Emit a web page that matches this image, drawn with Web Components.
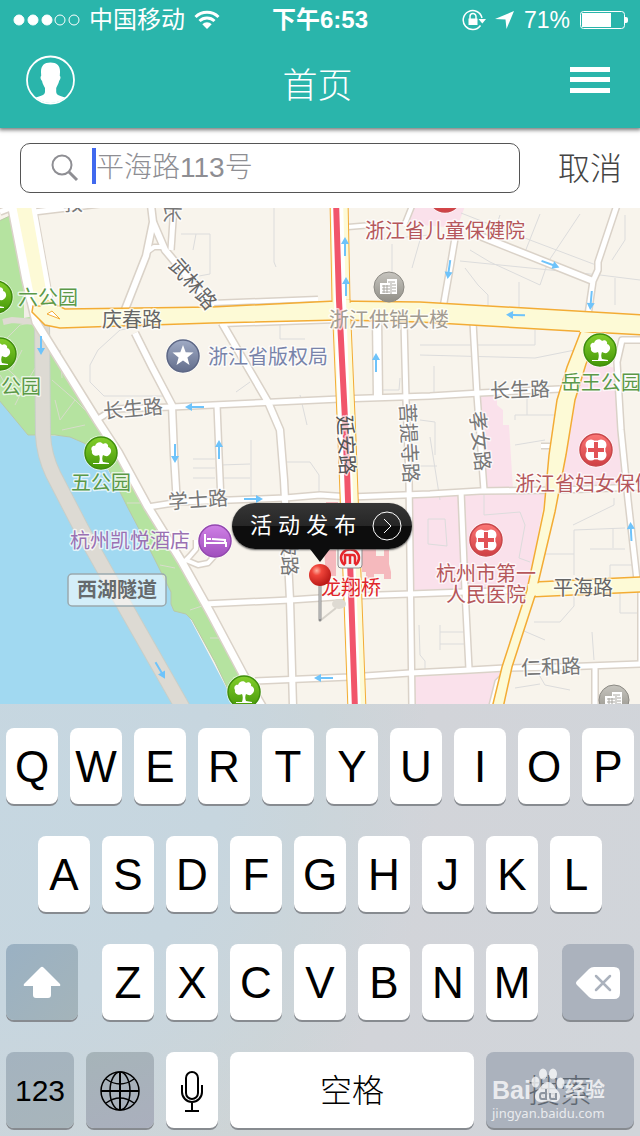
<!DOCTYPE html>
<html lang="zh-CN">
<head>
<meta charset="UTF-8">
<meta name="viewport" content="width=device-width, initial-scale=1">
<title>首页</title>
<style>
    body {
        margin: 0;
        min-height: 100vh;
        display: flex;
        flex-direction: column;
        background: white;
        font-family: "Liberation Sans", "Noto Sans CJK SC", sans-serif;
        font-weight: 300;
    }

    header {
        position: relative;
        z-index: 1;
        background: #2ab5ab;
        color: white;
        box-shadow: 0 1px 4px 1px #777;
    }
</style>
</head>
<body>
    <header>
        <status-bar operador="中国移动" hora="下午6:53" bateria="71"></status-bar>
        <nav-bar>首页</nav-bar>
    </header>
    <search-row valor="平海路113号">取消</search-row>
    <city-map>
        <map-callout>活 动 发 布</map-callout>
    </city-map>
    <soft-keyboard></soft-keyboard>

<script>
class StatusBar extends HTMLElement {
    constructor() {
        super();
        this.attachShadow({ mode: 'open' });
    }

    connectedCallback() {
        const operador = this.getAttribute('operador') || '';
        const hora = this.getAttribute('hora') || '';
        const bateria = this.getAttribute('bateria') || '0';

        this.shadowRoot.innerHTML = `
            <style>
                :host {
                    display: grid;
                    grid-template-columns: 1fr auto 1fr;
                    align-items: center;
                    height: 40px;
                    padding: 0 12px;
                    font-size: 24px;
                    line-height: 40px;
                    white-space: nowrap;
                }

                div {
                    display: flex;
                    align-items: center;
                    gap: 9px;
                }

                .derecha {
                    justify-content: flex-end;
                    font-size: 23px;
                }

                span {
                    font-weight: 400;
                }

                b {
                    font-weight: 700;
                }
            </style>
            <div>
                <svg width="68" height="14" fill="white" stroke="white">
                    <circle cx="7" cy="7" r="5"/><circle cx="21" cy="7" r="5"/><circle cx="35" cy="7" r="5"/>
                    <g fill="none"><circle cx="48" cy="7" r="5"/><circle cx="62" cy="7" r="5"/></g>
                </svg>
                <span>${operador}</span>
                <svg width="26" height="20" viewBox="0 0 26 20" fill="none" stroke="white" stroke-width="3">
                    <path d="M1.5 7 A16.5 16.5 0 0 1 24.5 7"/>
                    <path d="M5.5 11 A10.8 10.8 0 0 1 20.500 11"/>
                    <path d="M13 19 L8.300 14.300 A6.500 6.500 0 0 1 17.700 14.300 Z" fill="white" stroke="none"/>
                </svg>
            </div>
            <b>${hora}</b>
            <div class="derecha">
                <svg width="24" height="22" viewBox="0 0 24 22" fill="none" stroke="white">
                    <path d="M18.500 16.500 A9.500 9.500 0 1 1 20 9" stroke-width="1.500"/>
                    <path d="M16.500 10 H24 L20.300 14.500 Z" fill="white" stroke="none"/>
                    <rect x="6.500" y="9.500" width="9" height="6.500" fill="white" stroke="none"/>
                    <path d="M8 10 V7.500 A3 3 0 0 1 14 7.500 V10" stroke-width="1.500"/>
                </svg>
                <svg width="20" height="20" viewBox="0 0 20 20" fill="white"><path d="M19 1 L11.500 19 L10.500 9.500 L0 9 Z"/></svg>
                <span>${bateria}%</span>
                <svg width="49" height="20" viewBox="0 0 49 20" fill="none" stroke="white">
                    <rect x="1.500" y="1.500" width="44" height="17" rx="3"/>
                    <rect x="3" y="3" width="29" height="14" fill="white" stroke="none"/>
                    <path d="M46 7 h1 a2 2 0 0 1 2 2 v2 a2 2 0 0 1 -2 2 h-1 Z" fill="white" stroke="none"/>
                </svg>
            </div>
        `;
    }
}

class NavBar extends HTMLElement {
    constructor() {
        super();
        this.attachShadow({ mode: 'open' });
    }

    connectedCallback() {
        this.shadowRoot.innerHTML = `
            <style>
                :host {
                    display: grid;
                    grid-template-columns: 1fr auto 1fr;
                    align-items: center;
                    height: 80px;
                    padding: 0 30px 8px 25px;
                }

                h1 {
                    margin: 0;
                    padding-top: 12px;
                    font-size: 35px;
                    font-weight: 300;
                    line-height: 44px;
                }

                button {
                    border: 0;
                    padding: 0;
                    background: none;
                    justify-self: start;
                }

                .menu {
                    justify-self: end;
                }

                svg {
                    display: block;
                }
            </style>
            <button aria-label="个人中心">
                <svg width="51" height="50" viewBox="0 0 51 50">
                    <clipPath id="c"><circle cx="25.500" cy="25" r="23"/></clipPath>
                    <circle cx="25.500" cy="25" r="23.500" fill="none" stroke="white" stroke-width="1.800"/>
                    <path clip-path="url(#c)" fill="white" d="M25.500 7.500 C32 7.500 35.300 11 35 17 L34.800 21 C36 21.500 35.500 24.500 34.200 25.800 C33.500 29 32 31 31.200 33 V37 C31.500 40.500 36 41 40 42.500 C42 43.500 43 46 43 50 H8 C8 46 9 43.500 11 42.500 C15 41 19.500 40.500 20 37 V33 C19 31 17.500 29 17 25.800 C15.500 24.500 15 21.500 16.200 21 L16 17 C15.800 11 19 7.500 25.500 7.500 Z"/>
                </svg>
            </button>
            <h1><slot></slot></h1>
            <button class="menu" aria-label="菜单">
                <svg width="40" height="28" fill="white">
                    <rect y="1" width="40" height="5"/><rect y="11" width="40" height="5"/><rect y="22" width="40" height="5"/>
                </svg>
            </button>
        `;
    }
}

class SearchRow extends HTMLElement {
    constructor() {
        super();
        this.attachShadow({ mode: 'open' });
    }

    connectedCallback() {
        const valor = this.getAttribute('valor') || '';

        this.shadowRoot.innerHTML = `
            <style>
                :host {
                    display: flex;
                    align-items: center;
                    gap: 38px;
                    height: 80px;
                    padding: 0 18px 0 20px;
                    background: white;
                }

                label {
                    flex: 1;
                    min-width: 0;
                    height: 48px;
                    display: flex;
                    align-items: center;
                    border: 1px solid #555;
                    border-radius: 10px;
                    padding-left: 30px;
                }

                .cursor {
                    width: 4px;
                    height: 36px;
                    margin: 0 0 4px 13px;
                    background: #4169ee;
                }

                input {
                    flex: 1;
                    min-width: 0;
                    border: 0;
                    padding: 0;
                    outline: none;
                    background: none;
                    font: inherit;
                    font-size: 28px;
                    line-height: 40px;
                    color: #8e8e93;
                }

                button {
                    border: 0;
                    padding: 2px 0 0;
                    background: none;
                    font: inherit;
                    font-size: 32px;
                    line-height: 40px;
                    color: #444;
                }
            </style>
            <label aria-label="搜索地点">
                <svg width="28" height="28" fill="none" stroke="#8e8e93">
                    <circle cx="11" cy="11" r="9.500" stroke-width="2"/>
                    <path d="M18 18 L26 26" stroke-width="3"/>
                </svg>
                <span class="cursor"></span>
                <input type="text" value="${valor}">
            </label>
            <button><slot></slot></button>
        `;
    }
}

// city-map: every coordinate below is in the viewBox of the map (0 208 640 496)

const calles = [
    ['M0 212 L13 207', 5], ['M34 212 L100 204', 5],
    ['M151 205 L153 222 L146 256 L124 312', 6],
    ['M153 222 L165 250 L186 275 L214 310', 6],
    ['M174 205 L171 250', 5], ['M147 252 L154 247 L166 247', 4],
    ['M135 333 L152 367 L172 405 L174 455 L177 505', 6],
    ['M98 419 L114 409 L172 407 L213 405 L340 399 L430 396 L480 393 L560 389', 5],
    ['M222 323 L268 402 L280 430 L284 480 L290 600 L293 706', 6],
    ['M217 405 L219 455 L221 502', 5],
    ['M212 303 L318 299', 4], ['M222 324 L338 320', 4],
    ['M148 507 L180 502 L285 498 L320 495 L350 497 L430 494 L480 491 L560 490 L642 487', 5],
    ['M377 318 L378 398', 8], ['M404 322 L406 400 L409 480 L412 706', 5],
    ['M473 322 L477 395 L484 490', 5], ['M461 491 L465 590 L469 669', 5],
    ['M204 604 L290 600 L350 596 L410 594 L465 592 L532 590', 5],
    ['M255 681 L350 677 L410 673 L470 670 L505 668 L560 667 L642 664', 5],
    ['M183 563 L190 556 L196 549 V540 M186 560 L198 565 L208 563 L218 552', 4],
    ['M348 227 L372 225 M412 206 L404 226', 4],
    ['M455 238 L450 268 L443 308', 5], ['M480 236 L593 281', 6],
    ['M617 205 L598 262 L598 270 L593 281 L588 315', 5],
    ['M642 340 L622 340 L617 362 L621 430 L628 500 L637 580', 5],
    ['M541 446 L553 446', 4], ['M595 667 V706', 5], ['M506 674 L498 682 L492 706', 5],
    ['M640 590 V664', 3],
    ['M12 208 L26 280 L36 322 L97 420 L118 452 L148 507 L182 562 L210 612 L243 674 L263 708', 7]
];

const lindes = `M181 234 H210 V274 L199 276 M196 234 L193 250 M274 208 V262 L276 267 M280 324 V339 H305 M236 392 L250 382 M150 325
    L120 330 L98 350 L90 365 V382 L104 396 H165 M372 240 L430 235 M392 244 V290 M420 240 L412 268 M400 378 L399 390 H378
    M461 213 L530 240 L596 265 M470 250 L490 262 L540 285 L548 262 L580 214 M465 268 L478 285 L488 295 V308 M519 282 V308
    M500 215 L490 245 M540 214 L525 252 M460 261 L600 275 L640 280 M615 278 V305 M420 345 H535 V330 M420 355 L535 358 L575 350
    M434 366 V392 M420 420 L435 422 V455 M430 437 L440 500 M415 466 H437 M515 420 V415 H555 M527 398 V415 M515 445 L545 440
    M300 395 L307 425 M285 462 H310 L319 475 V495 M220 465 L250 464 M251 440 V498 M220 478 H250 M193 459 H215 M193 468 H215
    M193 478 H215 M428 519 H445 L447 546 L428 544 Z M484 495 V515 L520 512 L525 525 L519 558 L530 562 M573 525 L614 505 V498
    M574 530 V575 M545 554 H574 M574 530 L625 528 M590 549 H625 M613 529 V548 M610 577 V565 H635 M620 593 V613 H640
    M534 622 L560 622 L574 606 V592 M592 632 L594 660 M524 631 L545 640 M440 625 V650 M440 632 H465 M440 644 H465
    M419 625 L420 655 L425 661 V672 M538 673 L545 685 L570 690 M515 688 L540 684 M625 215 V240 L612 260`;

const sendas = `M5 340 L20 325 L35 322 M22 350 L12 370 M0 362 L25 385 L40 360 M25 385 L15 405 M52 380 L75 400 L60 420 L55 400
    M75 400 L90 415 M62 430 L85 425 M127 503 H140 M160 565 L175 568 M190 610 L205 605 M210 638 H220 M60 350 L62 378 M0 375 L12 395`;

const puntos = [
    ['arbol', -4, 297], ['arbol', 0, 354], ['arbol', 101, 453], ['arbol', 244, 692], ['arbol', 600, 350],
    ['estrella', 183, 356], ['hospital', 445, 196], ['hospital', 486, 540], ['hospital', 596, 450],
    ['hotel', 215, 541], ['edificio', 389, 287], ['edificio', 614, 700]
];

const flechas = [
    [41, 345, 90], [195, 407, 180], [175, 453, 90], [219, 450, -90], [345, 247, -90], [346, 287, -90], [376, 363, -90],
    [449, 269, 98], [550, 264, 20], [591, 300, 95], [516, 315, 182], [253, 499, 0], [324, 678, 180], [160, 670, 60], [631, 532, -93]
];

// text, centre x, centre y, colour, turn
const nombres = [
    ['教', 73, 204, '#777'], ['长', 172, 213, '#777', 92], ['武林路', 193, 284, '#666', 49],
    ['六公园', 48, 298, '#5b9948'], ['公园', 21, 387, '#5b9948'], ['五公园', 101, 483, '#5b9948'], ['岳王公园', 601, 383, '#5b9948'],
    ['庆春路', 132, 320, '#666'], ['长生路', 133, 409, '#777', -5], ['长生路', 520, 390, '#777', -2],
    ['学士路', 198, 500, '#777', -4], ['仁和路', 551, 667, '#777', -2], ['平海路', 583, 588, '#666'],
    ['浙江省版权局', 268, 357, '#7883a9'], ['浙江供销大楼', 389, 320, '#a29b91'], ['杭州凯悦酒店', 130, 541, '#9a70b3'],
    ['浙江省儿童保健院', 445, 231, '#b5575b'], ['浙江省妇女保健院', 595, 484, '#b5575b'],
    ['杭州市第一', 486, 574, '#b5575b'], ['人民医院', 486, 595, '#b5575b'],
    ['延安路', 346, 445, '#555', 87], ['菩提寺路', 409, 443, '#777', 87], ['孝女路', 480, 441, '#777', 84],
    ['坡路', 289, 556, '#777', 88], ['龙翔桥', 351, 588, '#e0252b']
];

class CityMap extends HTMLElement {
    constructor() {
        super();
        this.attachShadow({ mode: 'open' });
    }

    connectedCallback() {
        const trazos = (extra) => calles.map(([d, w]) => `<path d="${d}" stroke-width="${w + extra}"/>`).join('');
        const iconos = puntos.map(([id, x, y]) => `<use href="#${id}" x="${x}" y="${y}"/>`).join('');
        const sentidos = flechas.map(([x, y, g]) => `<use href="#flecha" transform="translate(${x} ${y}) rotate(${g})"/>`).join('');
        const textos = nombres.map(([t, x, y, color, g]) =>
            `<text fill="${color}" transform="translate(${x} ${y}) rotate(${g || 0})" y="7">${t}</text>`).join('');

        this.shadowRoot.innerHTML = `
            <style>
                :host {
                    display: block;
                    position: relative;
                    flex: 1;
                    min-height: 496px;
                    overflow: hidden;
                    background: #f8f4ec;
                }

                svg {
                    position: absolute;
                    inset: 0;
                    width: 100%;
                    height: 100%;
                }

                text {
                    font-size: 20px;
                    font-weight: 400;
                    text-anchor: middle;
                    paint-order: stroke;
                    stroke: rgba(255, 255, 255, 0.7);
                    stroke-width: 3px;
                    stroke-linejoin: round;
                }

                .tunel {
                    font-weight: 700;
                    stroke: none;
                }
            </style>
            <svg viewBox="0 208 640 496" preserveAspectRatio="xMidYMid slice">
                <defs>
                    <linearGradient id="gVerde" x2="0" y2="1"><stop stop-color="#83cf2c"/><stop offset="1" stop-color="#459708"/></linearGradient>
                    <linearGradient id="gRojo" x2="0" y2="1"><stop stop-color="#fb7675"/><stop offset="1" stop-color="#cf4043"/></linearGradient>
                    <linearGradient id="gAzul" x2="0" y2="1"><stop stop-color="#a0abc5"/><stop offset="1" stop-color="#626d8b"/></linearGradient>
                    <linearGradient id="gLila" x2="0" y2="1"><stop stop-color="#cf80e6"/><stop offset="1" stop-color="#a04fbd"/></linearGradient>
                    <linearGradient id="gGris" x2="0" y2="1"><stop stop-color="#c7c5bf"/><stop offset="1" stop-color="#918f87"/></linearGradient>
                    <g id="arbol">
                        <circle r="17.500" fill="white" opacity="0.700"/>
                        <circle r="16" fill="url(#gVerde)" stroke="#3f8d0c" stroke-width="1.500"/>
                        <path fill="white" d="M-2 10 C-1 7 -1 4 -2 2 C-5 4 -10 2 -9 -2 C-11 -5 -8 -8 -6 -7 C-5 -11 0 -12 2 -9 C5 -11 8 -8 7 -6 C11 -5 11 0 8 2 C6 4 4 3 2 2 C1 4 1 7 2 9 L8 10 V11 H-8 V10 Z"/>
                    </g>
                    <g id="hospital">
                        <circle r="17.500" fill="white" opacity="0.700"/>
                        <circle r="16" fill="url(#gRojo)" stroke="#c8464a" stroke-width="1.500"/>
                        <g fill="white"><circle cx="-5" cy="-5" r="5.500"/><circle cx="5" cy="-5" r="5.500"/><circle cx="-5" cy="5" r="5.500"/><circle cx="5" cy="5" r="5.500"/><circle r="9.500"/></g>
                        <path d="M0 -8 V8 M-8 0 H8" stroke="#e25356" stroke-width="4"/>
                    </g>
                    <g id="estrella">
                        <circle r="17.500" fill="white" opacity="0.700"/>
                        <circle r="16" fill="url(#gAzul)" stroke="#5d6785" stroke-width="1.500"/>
                        <path fill="white" d="M0 -11 L2.700 -3.700 L10.500 -3.400 L4.400 1.400 L6.500 8.900 L0 4.600 L-6.500 8.900 L-4.400 1.400 L-10.500 -3.400 L-2.700 -3.700 Z"/>
                    </g>
                    <g id="hotel">
                        <circle r="17.500" fill="white" opacity="0.700"/>
                        <circle r="16" fill="url(#gLila)" stroke="#9347ae" stroke-width="1.500"/>
                        <path fill="none" stroke="white" stroke-width="2" d="M-10 -7 V6 M-10 2 H11 V6 M-8 -2 H-4 M-3 -2 L10 -1 V2"/>
                    </g>
                    <g id="edificio">
                        <circle r="15" fill="url(#gGris)" stroke="#8c8a84"/>
                        <path fill="white" d="M-9 -4 H-2 V-8 H8 V7 H-9 Z"/>
                        <path stroke="#a9a7a1" fill="none" d="M-7 -1 H1 M-7 2 H1 M-7 5 H1 M-1 -5 H6 M3 -2 H7 M3 1 H7 M3 4 H7 M2 -4 V7 M-5 -2 V6 M-2 -2 V6"/>
                    </g>
                    <path id="flecha" fill="#6ec3fa" d="M-9 -1 H3 V-4 L10 0 L3 4 V1 H-9 Z"/>
                    <radialGradient id="bola" cx="0.350" cy="0.300" r="0.750"><stop stop-color="#ffb0a0"/><stop offset="0.300" stop-color="#f0453a"/><stop offset="1" stop-color="#b51614"/></radialGradient>
                </defs>

                <!-- hospital blocks -->
                <path fill="#fae1eb" d="M412 495 L546 492 L527 591 L412 594 Z M480 394 L497 394 V405 L503 410 V425 H509 L513 490 L486 490 Z M586 362 L616 368 L622 488 L560 490 L572 410 Z M411 206 H465 L457 228 L409 224 Z M412 677 L500 672 L490 706 H412 Z"/>
                <path fill="#f5b9bd" d="M326 502 H338 V512 H326 Z M324 550 H336 V576 H326 Z M362 548 H376 V556 H384 V550 H389 V564 L391 572 V579 H384 V574 H374 V579 H366 V572 H362 Z"/>
                <!-- lake and its shore park -->
                <path fill="#a1d9f1" d="M0 398 L28 435 L70 436 L84 443 L108 470 L135 520 L175 590 L236 706 H0 Z"/>
                <path fill="#b5e3a0" stroke="#b9c9a6" d="M-1 221 L14 214 L26 280 L36 322 L97 420 L118 452 L148 507 L182 562 L210 612 L243 674 L255 706 H236 L215 662 L192 620 L186 614 L174 611 L171 604 V592 L150 550 L128 508 L108 468 L98 452 L84 443 L70 437 L55 435 H28 L-1 400 Z"/>
                <path fill="#f2eee6" d="M18 240 L26 280 L35 316 L24 318 V280 Z"/>
                <path fill="none" stroke="#d8dccb" d="${sendas}"/>
                <path fill="none" stroke="#dfdbd3" stroke-width="6" d="M3 322 L12 320 L36 322"/>
                <path fill="none" stroke="#c9cfc9" stroke-width="16" d="M42 322 L43 435 Q44 455 53 474 L82 530 L127 610 L184 710"/>
                <path fill="none" stroke="#dddad3" stroke-width="14" d="M42 322 L43 435 Q44 455 53 474 L82 530 L127 610 L184 710"/>
                <path fill="none" stroke="#dcdcdc" d="${lindes}"/>

                <g fill="none" stroke="#dad2c8" stroke-linejoin="round">${trazos(3)}</g>
                <path fill="none" stroke="#dad2c8" stroke-width="27" d="M22 200 L40 300"/>
                <g fill="none" stroke="white" stroke-linejoin="round">${trazos(0)}</g>
                <path fill="none" stroke="white" stroke-width="25" d="M22 200 L40 300"/>
                <path fill="#fdfad6" d="M15 200 H30 L46 290 L56 312 L36 306 Z"/>

                <!-- main roads -->
                <g fill="#fdfad6" stroke="#f3ac35" stroke-width="1.500">
                    <path d="M33 306 L40 306 L48 301 L65 309 L212 307 L335 301 L420 302 L645 315 V335 L590 332 L420 322 L340 320 L212 323 L60 328 L45 325 L32 312 Z"/>
                    <path d="M534 582 L642 577 V592 L530 597 Z"/>
                    <path d="M581 331 L567 367 L557 400 L549 455 L544 510 L527 590 L502 667 L492 708 H503 L512 667 L535 596 L555 512 L566 455 L575 400 L586 364 L600 333 Z"/>
                </g>
                <path fill="none" stroke="#fdfad6" stroke-width="8" d="M580 328 H602"/>
                <path fill="none" stroke="#fdfad6" stroke-width="12" d="M528 590 L542 589"/>
                <path fill="white" stroke="#f3ac35" d="M47 314 L60 319 L52 311 Z"/>
                <path fill="none" stroke="#f3ac35" stroke-width="19" d="M339 200 L341 300 L347 440 L357 710"/>
                <path fill="none" stroke="#fdfad6" stroke-width="17" d="M339 200 L341 300 L347 440 L357 710"/>
                <path fill="none" stroke="#fdfad6" stroke-width="16" d="M330 310 L352 311"/>
                <path fill="none" stroke="white" stroke-width="12" d="M337 200 L340 300 L345 440 L355 710"/>
                <path fill="none" stroke="#f1556b" stroke-width="6" d="M336 200 L339 300 L346 440 L355 710"/>

                ${sentidos}
                ${iconos}
                ${textos}

                <!-- tunnel sign -->
                <rect x="68" y="574" width="98" height="32" rx="4" fill="white" fill-opacity="0.550" stroke="#9aa9ae" stroke-width="1.500"/>
                <text class="tunel" x="117" y="597" fill="#666a6c">西湖隧道</text>

                <!-- metro station -->
                <rect x="338" y="546" width="24" height="22" rx="3" fill="#f4f4f4" stroke="#8e8e8e"/>
                <g fill="none" stroke="#e6262b" stroke-width="2.500">
                    <path d="M345 565 A9 8.500 0 1 1 355 565"/>
                    <path d="M345 564 V555 H353 Q355 555 355 558 V564 M350 555 V564"/>
                </g>

                <!-- pin -->
                <path d="M321 620 L336 608" stroke="#d6d2ca" stroke-width="2"/>
                <ellipse cx="339" cy="604" rx="7" ry="5" fill="#dedad2"/>
                <path d="M320 584 V620" stroke="#8d8d8d" stroke-width="3" stroke-linecap="round"/>
                <path d="M320 584 V619" stroke="#d8d8d8"/>
                <circle cx="320" cy="575" r="11" fill="url(#bola)"/>
            </svg>
            <slot></slot>
        `;
    }
}

class MapCallout extends HTMLElement {
    constructor() {
        super();
        this.attachShadow({ mode: 'open' });
    }

    connectedCallback() {
        this.shadowRoot.innerHTML = `
            <style>
                :host {
                    display: block;
                    position: absolute;
                    left: calc(50% - 88px);
                    top: 295px;
                    width: 180px;
                }

                button {
                    display: flex;
                    align-items: center;
                    justify-content: space-between;
                    width: 100%;
                    height: 46px;
                    border: 0;
                    border-radius: 23px;
                    padding: 0 10px 0 18px;
                    background: linear-gradient(#363636, #262626 50%, #0d0d0d 50%, #0d0d0d);
                    box-shadow: 0 1px 2px #555;
                    color: white;
                    font: inherit;
                    font-size: 22px;
                    font-weight: 400;
                    line-height: 42px;
                    white-space: nowrap;
                }

                .punta {
                    display: block;
                    margin-left: 78px;
                }
            </style>
            <button>
                <slot></slot>
                <svg width="30" height="30" fill="none" stroke="white">
                    <circle cx="15" cy="15" r="14"/>
                    <path d="M12 8 L19 15 L12 22"/>
                </svg>
            </button>
            <svg class="punta" width="20" height="13"><path d="M0 0 H20 L10 13 Z" fill="#0d0d0d"/></svg>
        `;
    }
}

class KeyCap extends HTMLElement {
    constructor() {
        super();
        this.attachShadow({ mode: 'open' });
    }

    connectedCallback() {
        const etiqueta = this.getAttribute('etiqueta') || this.textContent;

        this.shadowRoot.innerHTML = `
            <style>
                :host {
                    display: block;
                    flex: 52 1 0;
                    min-width: 0;
                }

                button {
                    display: flex;
                    align-items: center;
                    justify-content: center;
                    width: 100%;
                    height: 76px;
                    border: 0;
                    border-radius: 8px;
                    padding: 2px 0 0;
                    background: var(--fondo, white);
                    box-shadow: 0 2px 0 #878b90;
                    color: var(--tinta, black);
                    font: inherit;
                    font-size: var(--letra, 44px);
                    line-height: 52px;
                }
            </style>
            <button aria-label="${etiqueta}"><slot></slot></button>
        `;
    }
}

class SoftKeyboard extends HTMLElement {
    constructor() {
        super();
        this.attachShadow({ mode: 'open' });
    }

    connectedCallback() {
        const teclas = (letras) => letras.split('').map((l) => `<key-cap>${l}</key-cap>`).join('');

        this.shadowRoot.innerHTML = `
            <style>
                :host {
                    display: flex;
                    flex-direction: column;
                    gap: 32px;
                    position: relative;
                    padding: 24px 6px 8px;
                    background:
                        radial-gradient(circle at 0 20%, #c6d7e1 0, #c7d6df 30%, rgba(205, 213, 216, 0) 60%),
                        linear-gradient(100deg, #cdd5da, #cfd4d5 45%, #d2d4d9 60%, #d1d5da);
                }

                div {
                    display: flex;
                    gap: 12px;
                }

                .media {
                    padding: 0 32px;
                }

                .ancha {
                    flex-grow: 72;
                }

                .mayus {
                    margin-right: 12px;
                    --fondo: linear-gradient(135deg, #9ab1c3, #a4b4ba);
                }

                .borrar {
                    margin-left: 12px;
                    --fondo: #abb2bd;
                }

                .num {
                    flex-grow: 68;
                    --letra: 30px;
                    --fondo: linear-gradient(160deg, #a4b3bf, #a8b5bb);
                }

                .mundo {
                    --fondo: linear-gradient(160deg, #a6b4b9, #aaafbd);
                }

                .espacio {
                    flex-grow: 244;
                    --letra: 32px;
                }

                .buscar {
                    flex-grow: 148;
                    --letra: 32px;
                    --fondo: #abb2bd;
                    --tinta: #5f6872;
                }
            </style>
            <div>${teclas('QWERTYUIOP')}</div>
            <div class="media">${teclas('ASDFGHJKL')}</div>
            <div>
                <key-cap class="ancha mayus" etiqueta="Shift">
                    <svg width="40" height="34" fill="white"><path d="M18.500 1.500 Q20 0 21.500 1.500 L38 18 Q39 20 37 20 H29 V29 Q29 32 26 32 H14 Q11 32 11 29 V20 H3 Q1 20 2 18 Z"/></svg>
                </key-cap>
                ${teclas('ZXCVBNM')}
                <key-cap class="ancha borrar" etiqueta="删除">
                    <svg width="44" height="32"><path d="M13 2 Q15 0 18 0 H38 Q44 0 44 6 V26 Q44 32 38 32 H18 Q15 32 13 30 L1 18 Q-1 16 1 14 Z" fill="white"/><path d="M20 9 L34 23 M34 9 L20 23" stroke="#abb2bd" stroke-width="2.500" stroke-linecap="round"/></svg>
                </key-cap>
            </div>
            <div>
                <key-cap class="num">123</key-cap>
                <key-cap class="num mundo" etiqueta="切换键盘">
                    <svg width="42" height="42" fill="none" stroke="black" stroke-width="1.500">
                        <circle cx="21" cy="21" r="19"/>
                        <ellipse cx="21" cy="21" rx="10" ry="19"/>
                        <path d="M2 21 H40 M21 2 V40" stroke-width="2"/>
                        <path d="M7 9 Q21 19 35 9 M7 33 Q21 23 35 33"/>
                    </svg>
                </key-cap>
                <key-cap etiqueta="听写">
                    <svg width="24" height="42" fill="none" stroke="black" stroke-width="2">
                        <rect x="6" y="2" width="12" height="27" rx="6"/>
                        <path d="M2 15 V22 A10 10 0 0 0 22 22 V15 M12 32 V40 M5 41 H19"/>
                    </svg>
                </key-cap>
                <key-cap class="espacio">空格</key-cap>
                <key-cap class="buscar">搜索</key-cap>
            </div>
            <water-mark></water-mark>
        `;
    }
}

class WaterMark extends HTMLElement {
    constructor() {
        super();
        this.attachShadow({ mode: 'open' });
    }

    connectedCallback() {
        this.shadowRoot.innerHTML = `
            <style>
                :host {
                    display: block;
                    position: absolute;
                    right: 34px;
                    bottom: 14px;
                    width: 114px;
                    color: rgba(255, 255, 255, 0.75);
                    pointer-events: none;
                }

                div {
                    display: flex;
                    align-items: flex-end;
                    height: 36px;
                    font-weight: 700;
                    line-height: 28px;
                }

                b {
                    font-size: 25px;
                }

                .cn {
                    font-size: 20px;
                }

                p {
                    margin: 0;
                    font-family: "Noto Sans", sans-serif;
                    font-size: 13px;
                    font-weight: 400;
                    line-height: 18px;
                }
            </style>
            <div>
                <b>Bai</b>
                <svg width="34" height="36" viewBox="0 0 34 36" fill="currentColor">
                    <ellipse cx="4.500" cy="14" rx="4" ry="5.500"/><ellipse cx="12" cy="6" rx="4" ry="5.500"/>
                    <ellipse cx="22" cy="6" rx="4" ry="5.500"/><ellipse cx="29.500" cy="15" rx="4" ry="5.500"/>
                    <path d="M17 14 C22 14 23 19 27 23 C31 28 29 35 22 34 C18 33 15 33 11 34 C4 35 2 28 6 23 C10 19 12 14 17 14 Z"/>
                    <path fill="none" stroke="#8d959f" stroke-width="2" d="M15 21 V31 H11 Q9 31 9 28 Q9 25 11 25 H15 M19 25 V29 Q19 31 21 31 H25 V25"/>
                </svg>
                <span class="cn">经验</span>
            </div>
            <p>jingyan.baidu.com</p>
        `;
    }
}

customElements.define('status-bar', StatusBar);
customElements.define('nav-bar', NavBar);
customElements.define('search-row', SearchRow);
customElements.define('map-callout', MapCallout);
customElements.define('city-map', CityMap);
customElements.define('key-cap', KeyCap);
customElements.define('water-mark', WaterMark);
customElements.define('soft-keyboard', SoftKeyboard);
</script>
</body>
</html>
